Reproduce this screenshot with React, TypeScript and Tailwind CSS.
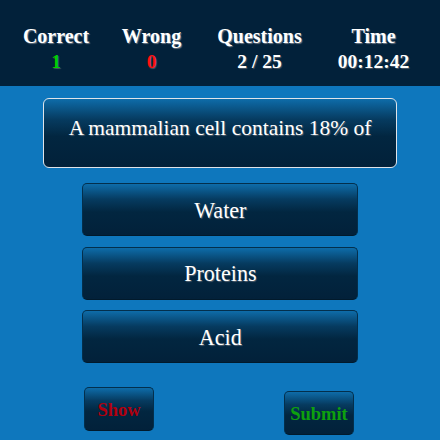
import React from "react";

const serif = { fontFamily: '"Liberation Serif", "Times New Roman", serif' };

export default function App() {
  const stats = [
    { label: "Correct", value: "1", color: "text-[#00d000]" },
    { label: "Wrong", value: "0", color: "text-[#ff1010]" },
    { label: "Questions", value: "2 / 25", color: "text-white" },
    { label: "Time", value: "00:12:42", color: "text-white" },
  ];
  const options = ["Water", "Proteins", "Acid"];
  const grad =
    "bg-[linear-gradient(to_bottom,#0e6ca9_0%,#063b60_30%,#022640_55%,#02213a_100%)]";
  return (
    <div className="w-[440px] h-[440px] overflow-hidden bg-[#0e77bd]" style={serif}>
      <div className="h-[86px] bg-[#02213a] pl-[8px] pt-[23px] grid grid-cols-[96px_95px_121px_107px]">
        {stats.map((s) => (
          <div key={s.label} className="flex flex-col items-center font-bold">
            <div className="text-[20px] leading-[26px] text-white [text-shadow:1px_1px_1px_#6b7785]">
              {s.label}
            </div>
            <div className={`text-[19.5px] leading-[26px] ${s.color} [text-shadow:1px_1px_1px_#4b5765]`}>
              {s.value}
            </div>
          </div>
        ))}
      </div>
      <div className="flex flex-col items-center">
        <div
          className={`mt-[12px] w-[354px] h-[70px] rounded-[6px] border border-[#dfe4ea] ${grad} pt-[17px] text-center text-[21.5px] leading-[24px] text-white [text-shadow:1px_1px_1px_#52606e]`}
        >
          A mammalian cell contains 18% of
        </div>
        <div className="mt-[15px] flex flex-col gap-[10.5px]">
          {options.map((o) => (
            <div
              key={o}
              className={`w-[276px] h-[53px] rounded-[5px] border border-[#032f4c] border-b-[#011a2c] ${grad} flex items-center justify-center text-white [text-shadow:1px_1px_1px_#52606e]`}
            >
              <span className="inline-block text-[24px] leading-[26px] scale-x-[0.92]">{o}</span>
            </div>
          ))}
        </div>
        <div className="w-full flex items-start mt-[24px]">
          <div
            className={`ml-[84px] w-[70px] h-[44px] rounded-[5px] border border-[#032f4c] border-b-[#011a2c] ${grad} flex items-center justify-center text-[18.5px] leading-[22px] font-bold text-[#b0000e] pt-[2px]`}
          >
            Show
          </div>
          <div
            className={`ml-[130px] mt-[4px] w-[70px] h-[44px] rounded-[5px] border border-[#032f4c] border-b-[#011a2c] ${grad} flex items-center justify-center text-[18.5px] leading-[22px] font-bold text-[#0ea00e] pt-[2px]`}
          >
            Submit
          </div>
        </div>
      </div>
    </div>
  );
}
